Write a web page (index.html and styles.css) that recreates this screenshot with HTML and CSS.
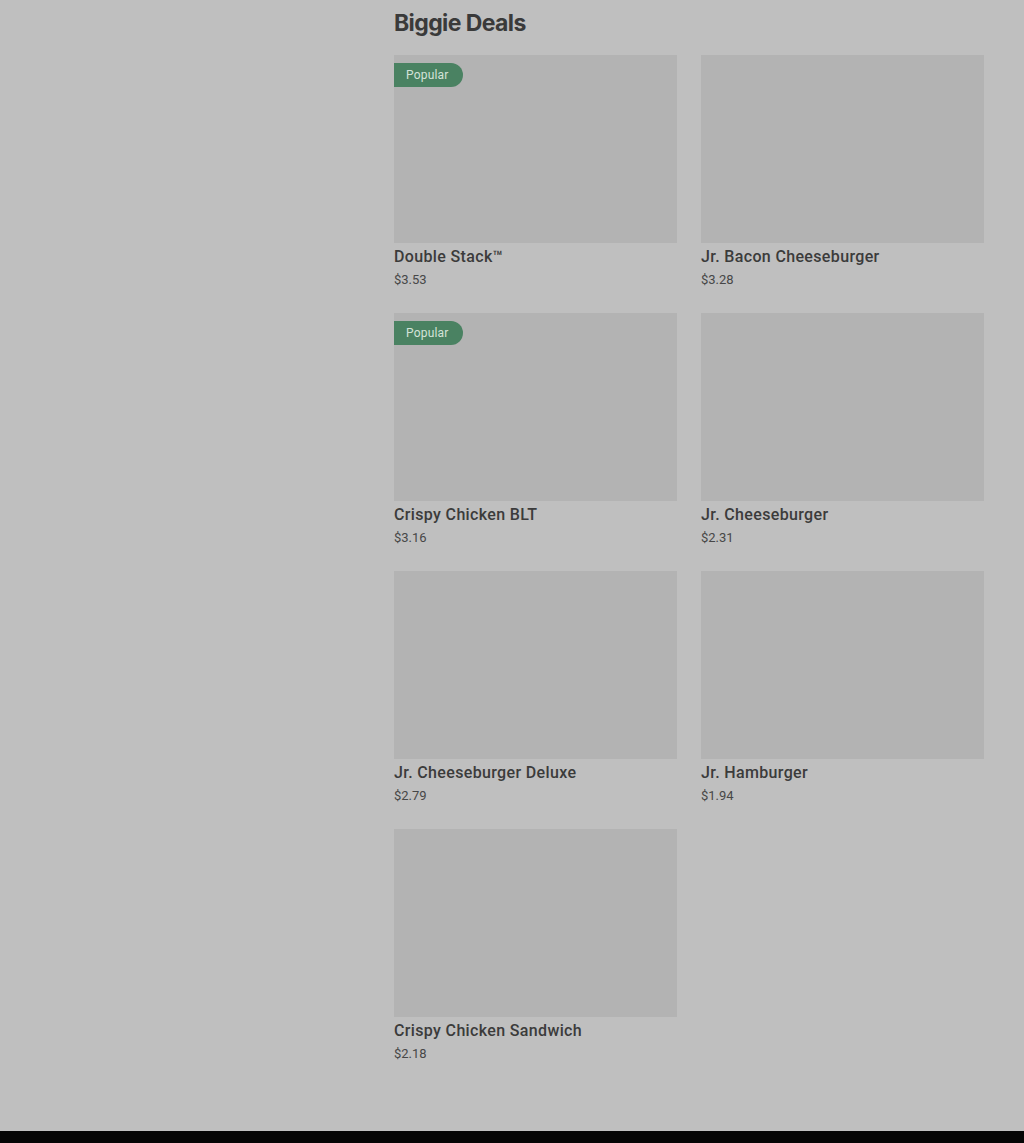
FILE: index.html
```html
<!DOCTYPE html>
<html lang="en">
<head>
    <meta charset="UTF-8">
    <meta name="viewport" content="width=device-width, initial-scale=1.0">
    <title>Biggie Deals</title>
    <link rel="stylesheet" href="styles.css">
</head>
<body>
    <main class="page">
        <section class="menu-section">
            <h2 class="section-title">Biggie Deals</h2>
            <div class="item-grid">
                <div class="item">
                    <div class="item-image"><span class="badge">Popular</span></div>
                    <div class="item-name">Double Stack™</div>
                    <div class="item-price">$3.53</div>
                </div>
                <div class="item">
                    <div class="item-image"></div>
                    <div class="item-name">Jr. Bacon Cheeseburger</div>
                    <div class="item-price">$3.28</div>
                </div>
                <div class="item">
                    <div class="item-image"><span class="badge">Popular</span></div>
                    <div class="item-name">Crispy Chicken BLT</div>
                    <div class="item-price">$3.16</div>
                </div>
                <div class="item">
                    <div class="item-image"></div>
                    <div class="item-name">Jr. Cheeseburger</div>
                    <div class="item-price">$2.31</div>
                </div>
                <div class="item">
                    <div class="item-image"></div>
                    <div class="item-name">Jr. Cheeseburger Deluxe</div>
                    <div class="item-price">$2.79</div>
                </div>
                <div class="item">
                    <div class="item-image"></div>
                    <div class="item-name">Jr. Hamburger</div>
                    <div class="item-price">$1.94</div>
                </div>
                <div class="item">
                    <div class="item-image"></div>
                    <div class="item-name">Crispy Chicken Sandwich</div>
                    <div class="item-price">$2.18</div>
                </div>
            </div>
        </section>
    </main>
    <footer class="footer"></footer>
</body>
</html>
```

FILE: styles.css
```css
body {
    font-family: Roboto, "Liberation Sans", sans-serif;
    background-color: #bfbfbf;
    color: #3b3b3b;
    margin: 0;
    padding: 0;
}
.page {
    height: 1131px;
    box-sizing: border-box;
    padding-left: 394px;
    padding-right: 40px;
}
.section-title {
    margin: 0;
    padding-top: 9px;
    height: 55px;
    box-sizing: border-box;
    font-family: Inter, "Open Sans", sans-serif;
    font-size: 23px;
    font-weight: 700;
    letter-spacing: -0.6px;
    color: #3a3a3a;
    line-height: 28px;
}
.item-grid {
    display: grid;
    grid-template-columns: 283px 283px;
    column-gap: 24px;
    row-gap: 25px;
}
.item {
    height: 233px;
}
.item-image {
    position: relative;
    height: 188px;
    background-color: #b3b3b3;
}
.badge {
    position: absolute;
    top: 8px;
    left: 0;
    height: 24px;
    line-height: 24px;
    padding: 0 14px 0 12px;
    background-color: #4a8262;
    color: #d4e3d9;
    font-size: 12px;
    letter-spacing: 0.2px;
    border-radius: 0 12px 12px 0;
}
.item-name {
    margin-top: 3px;
    font-size: 16px;
    font-weight: 500;
    letter-spacing: 0.35px;
    line-height: 22px;
    color: #3b3b3b;
}
.item-price {
    margin-top: 2px;
    font-size: 13px;
    line-height: 20px;
    color: #474747;
}
.footer {
    height: 12px;
    background-color: #050505;
}
```
